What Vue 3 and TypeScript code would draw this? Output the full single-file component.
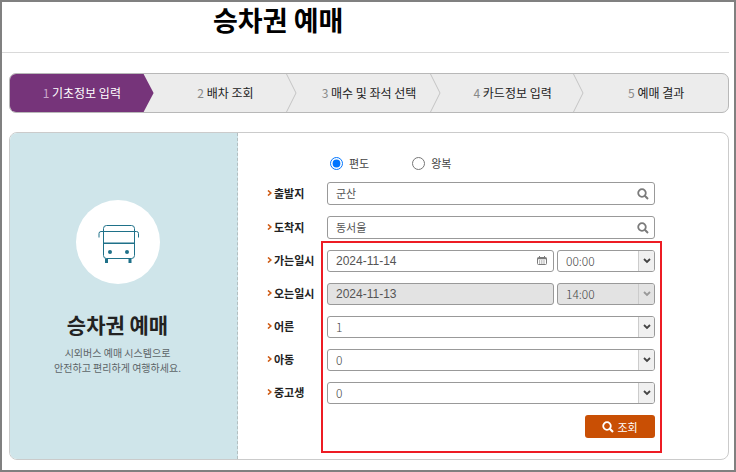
<script setup lang="ts">
import { ref } from 'vue'

type Trip = 'oneway' | 'round'

const steps: string[] = ['기초정보 입력', '배차 조회', '매수 및 좌석 선택', '카드정보 입력', '예매 결과']
const current = 0

const trips: { value: Trip; label: string }[] = [
  { value: 'oneway', label: '편도' },
  { value: 'round', label: '왕복' },
]
const trip = ref<Trip>('oneway')

const places = ref([
  { id: 'from', label: '출발지', value: '군산' },
  { id: 'to', label: '도착지', value: '동서울' },
])

const dates = ref([
  { id: 'depart', label: '가는일시', date: '2024-11-14', time: '00:00', disabled: false },
  { id: 'return', label: '오는일시', date: '2024-11-13', time: '14:00', disabled: true },
])

const passengers = ref([
  { id: 'adult', label: '어른', count: 1 },
  { id: 'child', label: '아동', count: 0 },
  { id: 'student', label: '중고생', count: 0 },
])

const hours: string[] = Array.from({ length: 24 }, (_, h) => `${String(h).padStart(2, '0')}:00`)
const counts: number[] = Array.from({ length: 10 }, (_, n) => n)
</script>

<template>
  <div class="page">
    <header class="head">
      <h1>승차권 예매</h1>
    </header>

    <main class="main">
      <ol class="steps">
        <li v-for="(step, i) in steps" :key="step" :class="{ active: i === current }">
          <span class="step-text"><span class="num">{{ i + 1 }}</span> {{ step }}</span>
          <svg v-if="i !== current && i < steps.length - 1" class="sep" viewBox="0 0 11 38" aria-hidden="true">
            <path d="M0.5 0L10 19L0.5 38" fill="none" stroke="#c4c4c4" />
          </svg>
        </li>
      </ol>

      <section class="panel">
        <aside class="intro">
          <div class="badge">
            <svg viewBox="0 0 84 84" aria-hidden="true">
              <g fill="none" stroke="#1f7189">
                <rect x="27.5" y="25.5" width="31" height="33" rx="3" />
                <path d="M23 37.5V33.5Q23 31.5 25 31.5H60.5Q62.5 31.5 62.5 33.5V37.5" />
                <path d="M27.5 43.3H58.5" stroke-width="1.4" />
              </g>
              <g fill="#1f7189">
                <circle cx="34" cy="52" r="2" />
                <circle cx="51" cy="52" r="2" />
                <rect x="29" y="58.5" width="3" height="4.5" />
                <rect x="52.5" y="58.5" width="3" height="4.5" />
              </g>
            </svg>
          </div>
          <h2>승차권 예매</h2>
          <p>시외버스 예매 시스템으로<br />안전하고 편리하게 여행하세요.</p>
        </aside>

        <form class="form" @submit.prevent>
          <div class="trips" role="radiogroup">
            <label v-for="t in trips" :key="t.value">
              <input v-model="trip" type="radio" name="trip" :value="t.value" />
              {{ t.label }}
            </label>
          </div>

          <div v-for="p in places" :key="p.id" class="row">
            <label class="name" :for="p.id">
              <svg viewBox="0 0 5 6" aria-hidden="true"><path d="M1 0.5L3.8 3L1 5.5" /></svg>{{ p.label }}
            </label>
            <div class="box tall">
              <input :id="p.id" v-model="p.value" type="text" />
              <button type="button" class="icon" :aria-label="p.label">
                <svg width="12" height="12" viewBox="0 0 12 12" fill="none" stroke="#7b7b7b">
                  <circle cx="5" cy="5" r="3.8" stroke-width="1.8" />
                  <path d="M7.8 7.8L11 11" stroke-width="2" />
                </svg>
              </button>
            </div>
          </div>

          <div class="details">
            <div v-for="d in dates" :key="d.id" class="row">
              <label class="name" :for="d.id">
                <svg viewBox="0 0 5 6" aria-hidden="true"><path d="M1 0.5L3.8 3L1 5.5" /></svg>{{ d.label }}
              </label>
              <div class="pair">
                <div class="box" :class="{ off: d.disabled }">
                  <input :id="d.id" v-model="d.date" type="text" :disabled="d.disabled" />
                  <button v-if="!d.disabled" type="button" class="icon" :aria-label="d.label">
                    <svg width="10" height="10" viewBox="0 0 10 10" fill="none" stroke="#7b7b7b">
                      <rect x="0.5" y="1.5" width="9" height="7" rx="1" />
                      <path d="M0.5 2.5H9.5" stroke-width="1.6" />
                      <path d="M2.5 0V3M7.5 0V3" />
                      <path d="M2 5H8M2 7H8" stroke-dasharray="1.2 1" />
                    </svg>
                  </button>
                </div>
                <div class="box" :class="{ off: d.disabled }">
                  <select v-model="d.time" :disabled="d.disabled" :aria-label="d.label">
                    <option v-for="h in hours" :key="h">{{ h }}</option>
                  </select>
                  <span class="arrow">
                    <svg width="8" height="6" viewBox="0 0 8 6"><path d="M1 1L4 4L7 1" /></svg>
                  </span>
                </div>
              </div>
            </div>

            <div v-for="p in passengers" :key="p.id" class="row">
              <label class="name" :for="p.id">
                <svg viewBox="0 0 5 6" aria-hidden="true"><path d="M1 0.5L3.8 3L1 5.5" /></svg>{{ p.label }}
              </label>
              <div class="box">
                <select :id="p.id" v-model="p.count">
                  <option v-for="n in counts" :key="n" :value="n">{{ n }}</option>
                </select>
                <span class="arrow">
                  <svg width="8" height="6" viewBox="0 0 8 6"><path d="M1 1L4 4L7 1" /></svg>
                </span>
              </div>
            </div>

            <button type="submit" class="submit">
              <svg width="12" height="12" viewBox="0 0 12 12" fill="none" stroke="#fff" aria-hidden="true">
                <circle cx="5" cy="5" r="3.8" stroke-width="1.8" />
                <path d="M7.8 7.8L11 11" stroke-width="2.2" />
              </svg>
              조회
            </button>
            <div class="marker"></div>
          </div>
        </form>
      </section>
    </main>
  </div>
</template>

<style>
body {
  background: #fff;
}
</style>

<style scoped>
* {
  box-sizing: border-box;
}

.page {
  min-height: 100vh;
  padding-right: 5px;
  border: 2px solid #808080;
  color: #222;
  font-family: "Noto Sans CJK KR", sans-serif;
  font-size: 11px;
}

.head {
  height: 51px;
  padding-left: 211px;
  border-bottom: 1px solid #d9d9d9;
}

h1 {
  margin: 0;
  color: #000;
  font-size: 27px;
  font-weight: 700;
  line-height: 36px;
}

.main {
  padding: 20px 0 10px 7px;
}

.steps {
  display: grid;
  grid-template-columns: repeat(5, 1fr);
  height: 40px;
  margin: 0 0 19px;
  padding: 0;
  overflow: hidden;
  border: 1px solid #b8b8b8;
  border-radius: 7px;
  background: #ececec;
  font-size: 12px;
  list-style: none;
}

.steps li {
  display: flex;
  align-items: center;
}

.step-text {
  flex: 1;
  padding-bottom: 2px;
  text-align: center;
}

.num {
  color: #888;
}

.sep {
  width: 11px;
  height: 38px;
  margin-left: -11px;
}

.steps .active {
  background: #76347a;
  color: #fff;
  clip-path: polygon(0 0, calc(100% - 10px) 0, 100% 50%, calc(100% - 10px) 100%, 0 100%);
}

.active .num {
  color: #c8a6ca;
}

.panel {
  display: grid;
  grid-template-columns: 228px 1fr;
  overflow: hidden;
  border: 1px solid #cbcbcb;
  border-radius: 8px;
}

.intro {
  display: flex;
  flex-direction: column;
  align-items: center;
  padding: 67px 12px 0 0;
  border-right: 1px dashed #b3bfc1;
  background: #cfe5ea;
  text-align: center;
}

.badge {
  width: 84px;
  height: 84px;
  border-radius: 50%;
  background: #fff;
}

.badge svg {
  display: block;
}

h2 {
  margin: 25px 0 6px;
  font-size: 21px;
  font-weight: 700;
  line-height: 30px;
}

.intro p {
  margin: 0;
  color: #5c6467;
  font-size: 10px;
  line-height: 15px;
}

.form {
  display: flex;
  flex-direction: column;
  gap: 11px;
  padding: 22px 73px 21px 29px;
}

.trips {
  display: flex;
  gap: 43px;
  height: 16px;
  padding-left: 63px;
  color: #444;
}

.trips label {
  display: flex;
  align-items: center;
  gap: 6px;
}

.trips input {
  width: 13px;
  height: 13px;
  margin: 0;
  accent-color: #0075ff;
}

.row {
  display: grid;
  grid-template-columns: 60px 1fr;
  align-items: center;
}

.name {
  display: flex;
  align-items: center;
  gap: 2px;
  padding-bottom: 2px;
  font-weight: 700;
  line-height: 16px;
  white-space: nowrap;
}

.name svg {
  width: 5px;
  height: 6px;
  fill: none;
  stroke: #cf5a12;
  stroke-width: 1.6;
}

.pair {
  display: grid;
  grid-template-columns: 1fr 98px;
  gap: 3px;
}

.box {
  display: flex;
  height: 22px;
  overflow: hidden;
  border: 1px solid #999;
  border-radius: 3px;
  background: #fff;
}

.tall {
  height: 23px;
}

.box input,
.box select {
  flex: 1;
  min-width: 0;
  margin: 0;
  padding: 0 8px;
  border: 0;
  outline: 0;
  appearance: none;
  background: transparent;
  color: #444;
  font-family: "Noto Sans CJK KR", sans-serif;
  font-size: 12px;
  opacity: 1;
}

.box select {
  padding-bottom: 2px;
  font-weight: 300;
}

.box input {
  color: #555;
  font-family: "Liberation Sans", "Noto Sans CJK KR", sans-serif;
}

.box.tall input {
  padding-bottom: 2px;
  font-size: 11px;
}

.icon {
  display: grid;
  place-items: center;
  width: 22px;
  padding: 0;
  border: 0;
  background: transparent;
}

.arrow {
  display: grid;
  place-items: center;
  width: 16px;
  border-left: 1px solid #ccc;
  background: #f0f0f0;
  pointer-events: none;
}

.arrow svg {
  fill: none;
  stroke: #444;
  stroke-width: 1.8;
}

.off,
.off .arrow {
  background: #e3e3e3;
}

.off .arrow svg {
  stroke: #999;
}

.details {
  position: relative;
  display: flex;
  flex-direction: column;
  gap: 11px;
}

.submit {
  display: flex;
  align-items: center;
  align-self: flex-end;
  justify-content: center;
  gap: 3px;
  width: 70px;
  height: 23px;
  padding: 0;
  border: 0;
  border-radius: 3px;
  background: #c94f04;
  color: #fff;
  font-family: inherit;
  font-size: 11px;
}

.marker {
  position: absolute;
  inset: -9px -7px -15px 54px;
  border: 2px solid #ed1c24;
  pointer-events: none;
}
</style>
